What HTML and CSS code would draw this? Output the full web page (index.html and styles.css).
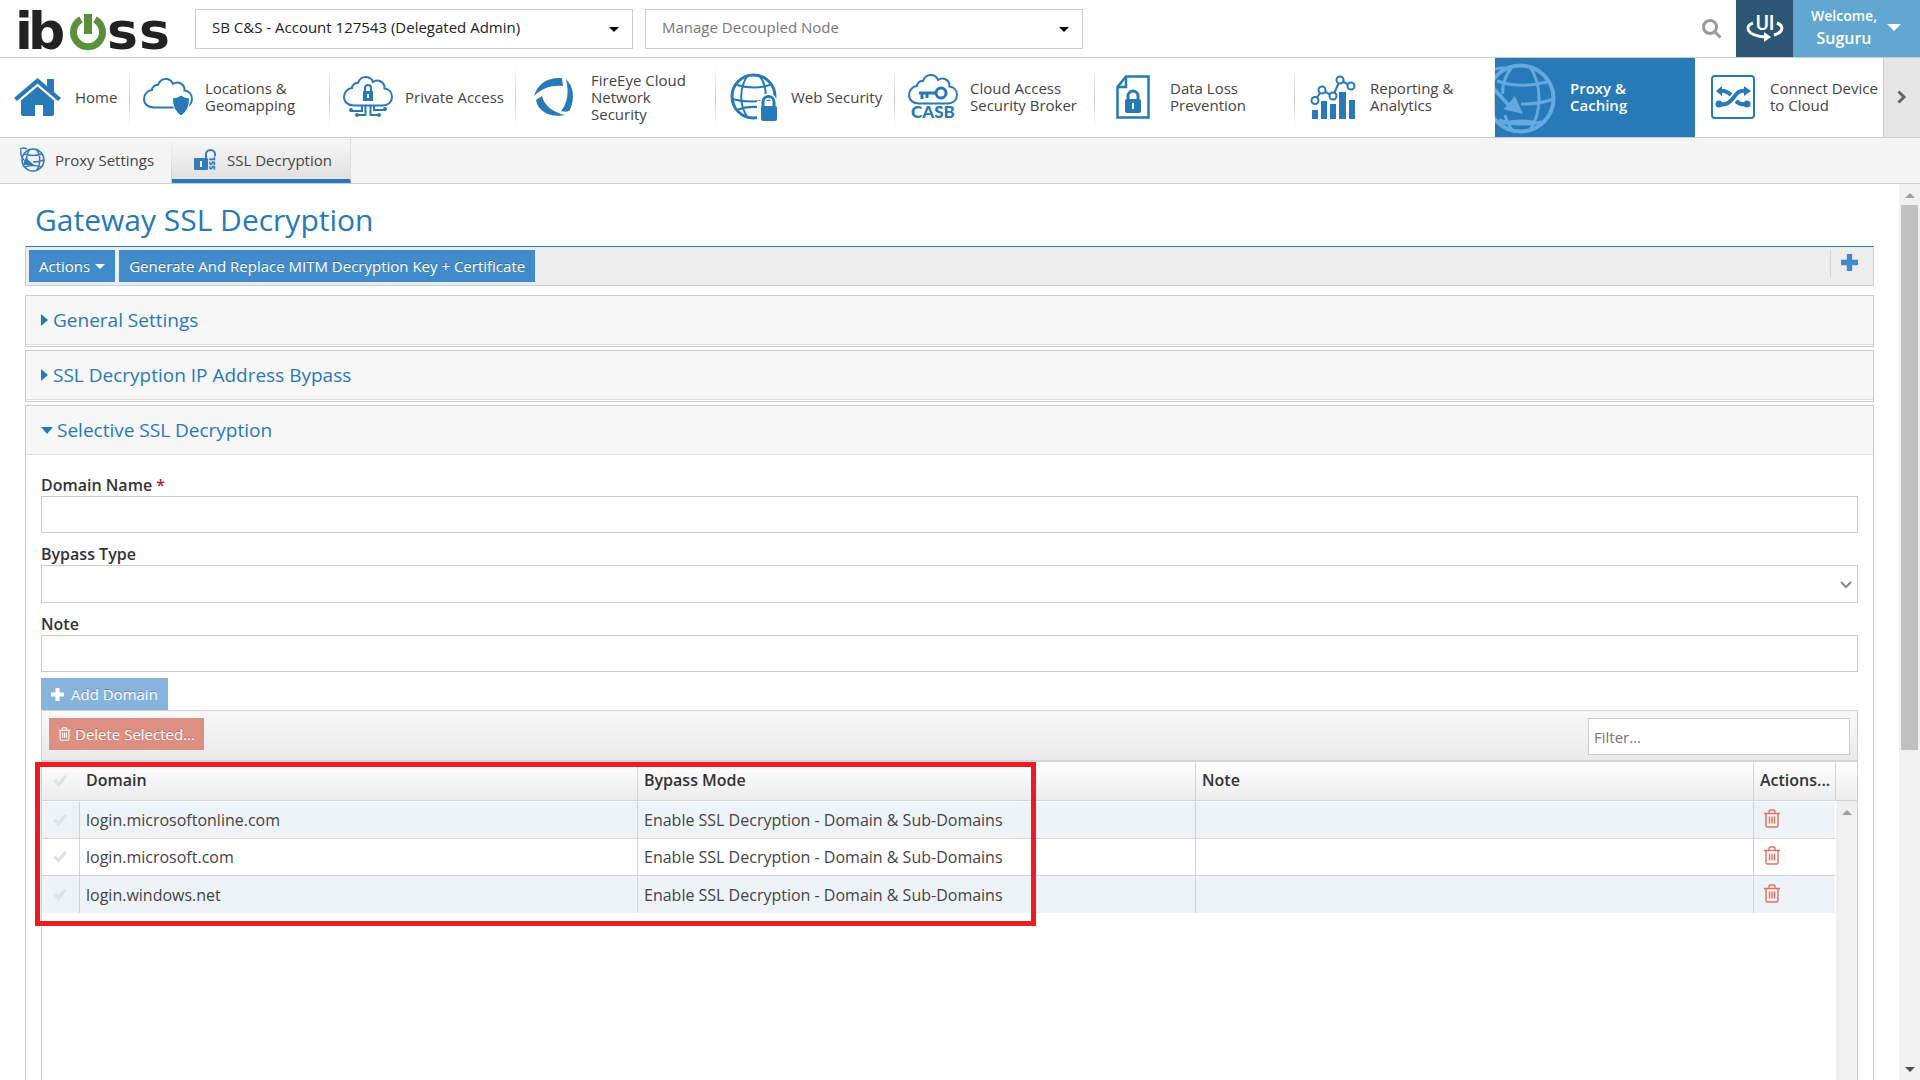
FILE: index.html
```html
<!DOCTYPE html>
<html lang="en">
<head>
    <meta charset="utf-8">
    <title>Gateway SSL Decryption</title>
    <link rel="stylesheet" href="styles.css">
</head>
<body>
    <svg class="sprite" aria-hidden="true">
        <symbol id="trash" viewBox="0 0 16 19">
            <path d="M2 5v11.500q0 1.500 1.500 1.500h9q1.500 0 1.500-1.500V5M0 4.500h16M5 4V2.500Q5 1 6.500 1h3Q11 1 11 2.500V4M5.500 7.500v7M8 7.500v7M10.500 7.500v7" fill="none" stroke="currentColor" stroke-width="1.400"/>
        </symbol>
        <symbol id="plus" viewBox="0 0 16 16">
            <path d="M5.500 0h5v5.500H16v5h-5.500V16h-5v-5.500H0v-5h5.500z" fill="currentColor"/>
        </symbol>
        <symbol id="cloud" viewBox="0 0 50 38">
            <path d="M11 29.500C5 29.500 1 26 1 21c0-5 3.500-8.500 8-9 0-3 3-5.500 6-5C16.500 3 19 1 22.500 1s6.500 2 7.500 5C35 2.500 42 6 41.500 12.500 46 13 49 16.500 49 21 49 26 45 29.500 40 29.500z" fill="none" stroke="currentColor" stroke-width="2"/>
        </symbol>
    </svg>

    <header class="topbar">
        <a class="logo" href="#" aria-label="iboss">
            <svg width="158" height="48" viewBox="0 0 158 48">
                <text class="logo-text" x="0 13" y="44">ib</text>
                <path d="M66 14.500a14.500 14.500 0 1 0 14 0" fill="none" stroke="#5a8f3c" stroke-width="7"/>
                <path d="M73 9v20" stroke="#5a8f3c" stroke-width="8"/>
                <text class="logo-text" x="92 124" y="44">ss</text>
            </svg>
        </a>
        <div class="select">
            <select aria-label="Account"><option>SB C&amp;S - Account 127543 (Delegated Admin)</option></select>
        </div>
        <div class="select">
            <select class="muted" aria-label="Node"><option>Manage Decoupled Node</option></select>
        </div>
        <button class="search" type="button" aria-label="Search">
            <svg width="20" height="20" viewBox="0 0 20 20" fill="none" stroke="#999" stroke-width="3"><circle cx="8" cy="8" r="6.500"/><path d="M12.500 12.500l6 6"/></svg>
        </button>
        <button class="switch-ui" type="button" aria-label="Switch UI">
            <svg width="38" height="28" viewBox="0 0 38 28">
                <path d="M7 8C-2 11 0 21 20 22" fill="none" stroke="#fff" stroke-width="3"/>
                <path d="M18 17l7 5-7 5z" fill="#fff"/>
                <path d="M31 8c7 3 7 9-3 12" fill="none" stroke="#fff" stroke-width="3"/>
                <text class="ui-text" x="19" y="15">UI</text>
            </svg>
        </button>
        <button class="user" type="button">
            <span class="user-name"><span>Welcome,</span><span class="name">Suguru</span></span>
            <span class="user-caret"></span>
        </button>
    </header>

    <nav class="main-nav">
        <a class="nav-item home" href="#">
            <span class="nav-icon"><svg width="47" height="39" viewBox="0 0 47 39" fill="currentColor">
                <path d="M23.500 0L33 8V1h7v13l7 6-3 3L23.500 5.500 3 23l-3-3z"/>
                <path d="M23.500 8.500L40 22.500V36q0 2-2 2h-9V27h-8v11H9q-2 0-2-2V22.500z"/>
            </svg></span>
            <span>Home</span>
        </a>
        <a class="nav-item" href="#">
            <span class="nav-icon"><svg width="50" height="38" viewBox="0 0 50 38">
                <use href="#cloud" width="50" height="38"/>
                <path d="M38 17q4 3 8.500 3Q47 32 38 38 29 32 29.500 20 34 20 38 17z" fill="currentColor" stroke="#fff"/>
            </svg></span>
            <span>Locations &amp;<br>Geomapping</span>
        </a>
        <a class="nav-item private" href="#">
            <span class="nav-icon"><svg width="50" height="42" viewBox="0 0 50 42">
                <use href="#cloud" width="50" height="38"/>
                <path d="M20 15h10v10H20z" fill="currentColor"/>
                <path d="M22 15v-3a3 3 0 0 1 6 0v3M19 30v5H8M22.500 30v9H14M27.500 30v9H36M31 30v4h11" fill="none" stroke="currentColor" stroke-width="2"/>
                <g fill="currentColor"><circle cx="8" cy="34" r="2"/><circle cx="14" cy="39" r="2"/><circle cx="36" cy="39" r="2"/><circle cx="42" cy="33" r="2"/></g>
                <path d="M25 18v4" stroke="#fff" stroke-width="2"/>
            </svg></span>
            <span>Private Access</span>
        </a>
        <a class="nav-item" href="#">
            <span class="nav-icon"><svg width="40" height="38" viewBox="0 0 40 38" fill="currentColor">
                <path d="M0 18C4 5 14-1 28 0l1 8C18 7 8 10 0 18z"/>
                <path d="M32 1c8 8 9 19 4 31-2 2-5 2-9 1 7-8 8-20 5-32z"/>
                <path d="M8 18c2 9 10 16 23 19C17 40 4 34 2 22z"/>
            </svg></span>
            <span>FireEye Cloud<br>Network<br>Security</span>
        </a>
        <a class="nav-item web" href="#">
            <span class="nav-icon"><svg width="48" height="48" viewBox="0 0 48 48" fill="none" stroke="currentColor" stroke-width="2">
                <circle cx="23.500" cy="23.500" r="21.500" stroke-width="3"/>
                <path d="M18 2C9 14 9 33 18 45M29 2c7 9 8 20 6 31M7 12q17 5 33 0M2 26q17 5 43 0M7 37q12-5 25-2"/>
                <path d="M28 29h18v19H28z" fill="#fff" stroke="#fff"/>
                <path d="M33 34v-5a5.500 5.500 0 0 1 11 0v5" stroke="#fff" stroke-width="6"/>
                <path d="M33 34v-5a5.500 5.500 0 0 1 11 0v5" stroke-width="3"/>
                <rect x="31" y="33" width="16" height="15" rx="2" fill="currentColor" stroke="none"/>
            </svg></span>
            <span>Web Security</span>
        </a>
        <a class="nav-item" href="#">
            <span class="nav-icon"><svg width="50" height="46" viewBox="0 0 50 46">
                <use href="#cloud" width="50" height="38"/>
                <g fill="none" stroke="currentColor" stroke-width="3"><circle cx="33" cy="19" r="5"/><path d="M28 19H11M14 19v6M19 19v5"/></g>
                <text class="casb-text" x="25" y="44">CASB</text>
            </svg></span>
            <span>Cloud Access<br>Security Broker</span>
        </a>
        <a class="nav-item" href="#">
            <span class="nav-icon"><svg width="34" height="44" viewBox="0 0 34 44">
                <path d="M10 1.500h22.500v41h-31V12zM10 1.500V12H1.500" fill="none" stroke="currentColor" stroke-width="2.500"/>
                <rect x="9" y="24" width="16" height="14" rx="2" fill="currentColor"/>
                <path d="M12 24v-3a5 5 0 0 1 10 0v3" fill="none" stroke="currentColor" stroke-width="3"/>
                <path d="M17 28v6" stroke="#fff" stroke-width="2"/>
            </svg></span>
            <span>Data Loss<br>Prevention</span>
        </a>
        <a class="nav-item" href="#">
            <span class="nav-icon"><svg width="44" height="44" viewBox="0 0 44 44">
                <path d="M1 35h6v9H1zM10 26h6v18h-6zM19 29h6v15h-6zM28 17h7v27h-7zM38 25h6v19h-6z" fill="currentColor"/>
                <path d="M4 25.500L11 15l11 6 7-16 11 6" fill="none" stroke="currentColor" stroke-width="2"/>
                <g fill="#fff" stroke="currentColor" stroke-width="2"><circle cx="4" cy="25.500" r="3.500"/><circle cx="11" cy="15" r="3.500"/><circle cx="22" cy="21" r="3.500"/><circle cx="29" cy="5" r="3.500"/><circle cx="40" cy="11" r="3.500"/></g>
            </svg></span>
            <span>Reporting &amp;<br>Analytics</span>
        </a>
        <a class="nav-item active" href="#">
            <span class="nav-icon"><svg width="62" height="79" viewBox="0 0 62 79" fill="none" stroke="#64aae0" stroke-width="3">
                <circle cx="25.500" cy="40.500" r="33" stroke-width="4"/>
                <path d="M17 9C10 18 7 28 8 36M35 9c12 17 12 46 0 63M2 23q23 8 50 1M26 46q20 0 32-5M4 62q20 7 43 2M6 66q20-6 40 0M10 57q3 10 8 16M0 11q7-2 14 0"/>
                <path d="M0 29l14 16 6-7 8 18-20-5 4-3L0 35z" fill="#64aae0" stroke="none"/>
            </svg></span>
            <span>Proxy &amp;<br>Caching</span>
        </a>
        <a class="nav-item last" href="#">
            <span class="nav-icon"><svg width="44" height="44" viewBox="0 0 44 44">
                <rect x="1" y="1" width="42" height="42" rx="3" fill="none" stroke="currentColor" stroke-width="2"/>
                <path d="M8 29c8 2 12-3 15-7s5-7 12-6M9 16c6-1 9 2 11 4M25 26c3 3 6 4 11 3" fill="none" stroke="currentColor" stroke-width="4"/>
                <path d="M33 11l7 5-7 5zM11 11l-6 5 6 5z" fill="currentColor"/>
                <circle cx="8" cy="29" r="3.500" fill="currentColor"/><circle cx="36" cy="29" r="3.500" fill="currentColor"/>
            </svg></span>
            <span>Connect Device<br>to Cloud</span>
        </a>
        <button class="nav-next" type="button" aria-label="More">
            <svg width="9" height="14" viewBox="0 0 9 14"><path d="M1.500 1.500L7 7l-5.500 5.500" fill="none" stroke="#666" stroke-width="3"/></svg>
        </button>
    </nav>

    <nav class="sub-nav">
        <a class="sub-item" href="#">
            <svg width="26" height="26" viewBox="0 0 26 26" fill="none" stroke="currentColor" stroke-width="1.500">
                <circle cx="14" cy="13" r="11"/>
                <path d="M11 2c-3 4-4 7-3 11M17 2c5 6 5 16 0 22M5 7q9 3 18 0M14 15q6 0 11-2M6 20q8-3 16 0M1 2q4-2 7 0M2 3c-1 5 2 10 6 13"/>
                <path d="M7 12l7 6-9-1z" fill="currentColor"/>
            </svg>
            <span>Proxy Settings</span>
        </a>
        <a class="sub-item active" href="#">
            <svg width="22" height="22" viewBox="0 0 22 22">
                <rect y="9" width="14" height="12" rx="1" fill="currentColor"/>
                <path d="M12 9V5.500a4.500 4.500 0 0 1 9 0V7" fill="none" stroke="currentColor" stroke-width="2"/>
                <path d="M7 12v6" stroke="#fff" stroke-width="2"/>
                <text class="ssl-text" transform="translate(21 21) rotate(-90)">SSL</text>
            </svg>
            <span>SSL Decryption</span>
        </a>
    </nav>

    <div class="page">
        <main class="content">
            <h1>Gateway SSL Decryption</h1>
            <div class="toolbar">
                <button class="btn" type="button">Actions <span class="caret"></span></button>
                <button class="btn" type="button">Generate And Replace MITM Decryption Key + Certificate</button>
                <button class="add" type="button" aria-label="Add"><svg width="17" height="17"><use href="#plus"/></svg></button>
            </div>

            <section class="panel">
                <h2><a href="#"><span class="arrow-right"></span>General Settings</a></h2>
            </section>
            <section class="panel">
                <h2><a href="#"><span class="arrow-right"></span>SSL Decryption IP Address Bypass</a></h2>
            </section>
            <section class="panel open">
                <h2><a href="#"><span class="arrow-down"></span>Selective SSL Decryption</a></h2>
                <form class="panel-body">
                    <label for="domain">Domain Name <span class="required">*</span></label>
                    <input class="field" type="text" id="domain">
                    <label for="bypass">Bypass Type</label>
                    <div class="field-select">
                        <select class="field" id="bypass"><option></option></select>
                        <svg width="12" height="8" viewBox="0 0 12 8"><path d="M1 1l5 5 5-5" fill="none" stroke="#888" stroke-width="2"/></svg>
                    </div>
                    <label for="note">Note</label>
                    <input class="field" type="text" id="note">
                    <button class="btn add-domain" type="button"><svg width="13" height="13"><use href="#plus"/></svg>Add Domain</button>

                    <div class="grid">
                        <div class="grid-toolbar">
                            <button class="btn delete" type="button"><svg width="13" height="14"><use href="#trash"/></svg>Delete Selected...</button>
                            <input class="filter" type="text" placeholder="Filter..." aria-label="Filter">
                        </div>
                        <div class="grid-main">
                            <table>
                                <thead>
                                    <tr>
                                        <th class="col-check"><input type="checkbox" aria-label="Select all"></th>
                                        <th>Domain</th>
                                        <th>Bypass Mode</th>
                                        <th>Note</th>
                                        <th class="col-actions">Actions...</th>
                                    </tr>
                                </thead>
                                <tbody>
                                    <tr>
                                        <td class="col-check"><input type="checkbox" aria-label="Select login.microsoftonline.com"></td>
                                        <td>login.microsoftonline.com</td>
                                        <td>Enable SSL Decryption - Domain &amp; Sub-Domains</td>
                                        <td></td>
                                        <td><button class="remove" type="button" aria-label="Delete"><svg width="16" height="19"><use href="#trash"/></svg></button></td>
                                    </tr>
                                    <tr>
                                        <td class="col-check"><input type="checkbox" aria-label="Select login.microsoft.com"></td>
                                        <td>login.microsoft.com</td>
                                        <td>Enable SSL Decryption - Domain &amp; Sub-Domains</td>
                                        <td></td>
                                        <td><button class="remove" type="button" aria-label="Delete"><svg width="16" height="19"><use href="#trash"/></svg></button></td>
                                    </tr>
                                    <tr>
                                        <td class="col-check"><input type="checkbox" aria-label="Select login.windows.net"></td>
                                        <td>login.windows.net</td>
                                        <td>Enable SSL Decryption - Domain &amp; Sub-Domains</td>
                                        <td></td>
                                        <td><button class="remove" type="button" aria-label="Delete"><svg width="16" height="19"><use href="#trash"/></svg></button></td>
                                    </tr>
                                </tbody>
                            </table>
                            <div class="grid-side">
                                <div class="side-head"></div>
                                <div class="side-track"><span class="arrow-up"></span></div>
                            </div>
                            <div class="highlight"></div>
                        </div>
                    </div>
                </form>
            </section>
        </main>
        <div class="scrollbar">
            <span class="arrow-up"></span>
            <div class="thumb"></div>
            <span class="arrow-bottom"></span>
        </div>
    </div>
</body>
</html>
```
FILE: styles.css
```css
* {
    box-sizing: border-box;
}

body {
    margin: 0;
    height: 100vh;
    display: flex;
    flex-direction: column;
    overflow: hidden;
    font-family: "Open Sans", sans-serif;
    font-size: 15px;
    color: #444;
    background-color: #fff;
}

button, input, select {
    font-family: inherit;
    font-size: inherit;
    border-radius: 0;
}

button {
    border: none;
    padding: 0;
    cursor: pointer;
}

a {
    color: inherit;
    text-decoration: none;
}

svg {
    display: block;
    flex: none;
    overflow: visible;
}

.sprite {
    position: absolute;
    width: 0;
    height: 0;
}

/* top bar */
.topbar {
    display: flex;
    align-items: center;
    flex: none;
    height: 58px;
    border-bottom: 1px solid #ccc;
}

.logo {
    width: 180px;
    margin-left: 15px;
}

.logo-text {
    font-family: "DejaVu Sans", sans-serif;
    font-weight: bold;
    font-size: 52px;
    fill: #222;
}

.select {
    position: relative;
    flex: 0 1 438px;
    margin-right: 12px;
}

.select select {
    display: block;
    width: 100%;
    height: 40px;
    padding: 0 16px 3px;
    border: 1px solid #ccc;
    background-color: #fff;
    color: #222;
    appearance: none;
}

.select .muted {
    color: #777;
}

.select::after {
    content: "";
    position: absolute;
    right: 14px;
    top: 18px;
    border: 5px solid transparent;
    border-top-color: #000;
    border-bottom: none;
}

.search {
    margin-left: auto;
    margin-right: 14px;
    background: none;
}

.switch-ui {
    display: flex;
    align-items: center;
    justify-content: center;
    width: 57px;
    height: 57px;
    background-color: #2d5674;
}

.ui-text {
    font-family: Roboto, sans-serif;
    font-size: 20px;
    font-weight: 500;
    text-anchor: middle;
    fill: #fff;
}

.user {
    display: flex;
    align-items: center;
    gap: 10px;
    width: 127px;
    height: 57px;
    padding: 0 0 3px 18px;
    background-color: #62a7d2;
    color: #fff;
    font-size: 14px;
    font-weight: 600;
}

.user-name {
    display: flex;
    flex-direction: column;
    line-height: 22px;
}

.name {
    font-size: 16px;
}

.user-caret {
    border: 7px solid transparent;
    border-top-color: #fff;
    border-bottom: none;
}

/* navigation */
.main-nav {
    display: flex;
    flex: none;
    height: 80px;
    border-bottom: 1px solid #ccc;
    line-height: 17px;
}

.nav-item {
    display: flex;
    align-items: center;
    flex: none;
    width: 200px;
    padding-bottom: 1px;
    border-right: 1px solid;
    border-image: linear-gradient(#fff 12%, #ccc 50%, #fff 88%) 1;
}

.nav-item.home {
    width: 130px;
}

.nav-item.private {
    width: 186px;
}

.nav-item.web {
    width: 179px;
}

.nav-icon {
    display: flex;
    justify-content: center;
    width: 75px;
    color: #2779b7;
}

.casb-text {
    font-family: Lato, sans-serif;
    font-size: 17px;
    font-weight: 900;
    text-anchor: middle;
    fill: #2779b7;
}

.nav-item.active {
    border: none;
    background-color: #2779b7;
    color: #fff;
    font-weight: 600;
}

.active .nav-icon {
    justify-content: flex-start;
    overflow: hidden;
}

.nav-item.last {
    flex: 1 1 0;
    min-width: 0;
    border: none;
    white-space: nowrap;
}

.nav-next {
    display: flex;
    align-items: center;
    justify-content: center;
    width: 37px;
    padding: 0 2px 2px 0;
    border-left: 1px solid #ccc;
    background-color: #e6e6e6;
}

.sub-nav {
    display: flex;
    flex: none;
    height: 46px;
    border-bottom: 1px solid #ccc;
    background-color: #f4f4f4;
}

.sub-item {
    display: flex;
    align-items: center;
    gap: 10px;
    padding: 0 17px 1px 19px;
    border-right: 1px solid;
    border-image: linear-gradient(#f4f4f4, #ccc) 1;
}

.sub-item svg {
    color: #337ab7;
}

.sub-item.active {
    gap: 11px;
    padding: 3px 18px 0 22px;
    border-bottom: 4px solid #2779b7;
    border-right: 1px solid #ddd;
    border-image: none;
    background: linear-gradient(#f4f4f4 20%, #e0e0e0);
}

.ssl-text {
    font-size: 8px;
    font-weight: 800;
    fill: #337ab7;
}

/* page */
.page {
    display: flex;
    flex: 1;
    min-height: 0;
}

.content {
    flex: 1;
    padding: 0 25px;
    overflow: hidden;
}

h1 {
    margin: 0;
    padding: 15px 10px 5px;
    font-size: 30px;
    font-weight: normal;
    line-height: 42px;
    color: #2779b7;
}

.toolbar {
    display: flex;
    gap: 4px;
    padding: 3px;
    margin-bottom: 9px;
    border: 1px solid #c5d0dc;
    border-top-color: #2779b7;
    background-color: #ededed;
}

.btn {
    display: flex;
    align-items: center;
    height: 32px;
    padding: 0 10px;
    background-color: #428bca;
    color: #fff;
    text-shadow: 0 -1px 0 rgba(0, 0, 0, 0.25);
}

.caret {
    margin-left: 5px;
    border: 5px solid transparent;
    border-top-color: #fff;
    border-bottom: none;
}

.add {
    height: 27px;
    margin-left: auto;
    padding: 0 12px 3px 10px;
    border-left: 1px solid #d5d5d5;
    background: none;
    color: #428bca;
}

.panel {
    margin-bottom: 3px;
    padding-bottom: 1px;
    border: 1px solid #ccc;
}

.panel h2 {
    margin: 0;
    border-bottom: 1px solid #ddd;
    background-color: #f7f7f7;
    font-size: 19px;
    font-weight: normal;
    line-height: 48px;
    color: #2779b7;
}

.panel h2 a {
    display: flex;
    align-items: center;
    padding-left: 15px;
}

.arrow-right {
    margin-right: 5px;
    border: 6px solid transparent;
    border-left: 7px solid #2779b7;
    border-right: none;
}

.arrow-down {
    margin-right: 4px;
    border: 6px solid transparent;
    border-top: 7px solid #2779b7;
    border-bottom: none;
}

.panel-body {
    padding: 18px 15px;
}

label {
    display: block;
    padding-top: 1px;
    font-size: 16px;
    font-weight: 600;
    line-height: 22px;
    color: #333;
}

.required {
    color: #b22222;
}

.field {
    display: block;
    width: 100%;
    height: 37px;
    margin-bottom: 9px;
    padding: 0 8px;
    border: 1px solid #ccc;
    background-color: #fff;
    appearance: none;
}

.field-select {
    position: relative;
}

.field-select .field {
    height: 38px;
}

.field-select svg {
    position: absolute;
    right: 6px;
    top: 16px;
}

.add-domain {
    gap: 7px;
    background-color: #86b4dd;
}

#note {
    margin-bottom: 6px;
}

/* domain list */
.grid {
    height: 600px;
    border: 1px solid #d4d4d4;
}

.grid-toolbar {
    display: flex;
    justify-content: space-between;
    height: 51px;
    padding: 7px;
    border-bottom: 2px solid #d4d4d4;
    background: linear-gradient(#f8f8f8, #eaeaea);
}

.delete {
    padding: 0 9px;
    gap: 4px;
    background-color: #dd8f83;
}

.filter {
    width: 262px;
    height: 37px;
    padding: 0 5px;
    border: 1px solid #ccc;
}

.grid-main {
    position: relative;
    display: flex;
    height: 100%;
}

table {
    flex: 1;
    align-self: flex-start;
    table-layout: fixed;
    width: 100%;
    border-collapse: separate;
    border-spacing: 0;
    font-size: 16px;
}

th, td {
    height: 37px;
    padding: 0 6px;
    border-right: 1px solid #d4d4d4;
    text-align: left;
    white-space: nowrap;
}

th {
    height: 39px;
    padding-bottom: 3px;
    border-bottom: 1px solid #d4d4d4;
    background: linear-gradient(#fff, #ececec);
    color: #333;
    font-weight: 600;
}

th.col-check {
    border-right: none;
}

td {
    border-bottom: 1px solid #d4d4d4;
}

tbody tr:first-child td {
    height: 38px;
    border-top: 1px solid #fff;
}

tbody tr:last-child td {
    border-bottom: none;
}

tbody tr:nth-child(odd) {
    background-color: #eef3f7;
}

td:last-child {
    border-right-color: #fff;
}

.col-check {
    width: 38px;
    padding: 0 0 0 11px;
}

.col-check input {
    display: block;
    width: 14px;
    height: 12px;
    margin: 0;
    appearance: none;
    background-color: #e0e3e5;
    clip-path: polygon(0 55%, 17% 38%, 38% 60%, 83% 0, 100% 17%, 40% 100%);
}

.col-actions {
    width: 82px;
}

.remove {
    display: block;
    margin-left: 4px;
    padding-bottom: 3px;
    background: none;
    color: #e4705c;
}

.grid-side {
    display: flex;
    flex-direction: column;
    flex: none;
    width: 21px;
}

.side-head {
    height: 39px;
    border-bottom: 1px solid #d4d4d4;
    background: linear-gradient(#fff, #ececec);
}

.side-track {
    flex: 1;
    padding: 9px 6px;
    background-color: #f0f0f0;
}

.arrow-up, .arrow-bottom {
    display: block;
    width: 10px;
    border: 5px solid transparent;
    border-bottom-color: #a0a0a0;
    border-top: none;
}

.arrow-bottom {
    border-top: 5px solid #505050;
    border-bottom: none;
}

.highlight {
    position: absolute;
    top: 0;
    left: -7px;
    width: 1001px;
    height: 164px;
    border: 5px solid #ed1c24;
}

.scrollbar {
    display: flex;
    flex-direction: column;
    align-items: center;
    flex: none;
    width: 21px;
    padding: 9px 0 8px;
    background-color: #f1f1f1;
}

.thumb {
    width: 17px;
    height: 62%;
    margin: 7px 0 auto;
    background-color: #c1c1c1;
}
```
